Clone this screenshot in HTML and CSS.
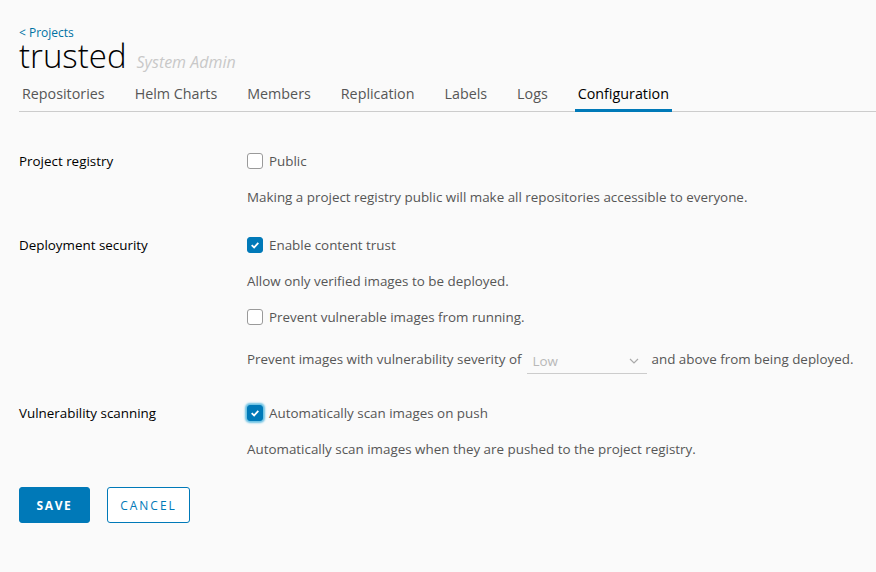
FILE: index.html
```html
<!DOCTYPE html>
<html>
<head>
<meta charset="utf-8">
<link rel="stylesheet" href="styles.css">
</head>
<body>
<div class="page">
  <a class="back" href="#">&lt; Projects</a>
  <div class="title-row">
    <h1 class="title">trusted</h1>
    <span class="role">System Admin</span>
  </div>
  <nav class="tabs">
    <span class="tab">Repositories</span>
    <span class="tab">Helm Charts</span>
    <span class="tab">Members</span>
    <span class="tab">Replication</span>
    <span class="tab">Labels</span>
    <span class="tab">Logs</span>
    <span class="tab active">Configuration</span>
  </nav>

  <div class="form">
    <div class="row">
      <div class="label">Project registry</div>
      <div class="controls">
        <label class="check"><span class="box"></span>Public</label>
        <p class="desc">Making a project registry public will make all repositories accessible to everyone.</p>
      </div>
    </div>
    <div class="row">
      <div class="label">Deployment security</div>
      <div class="controls">
        <label class="check"><span class="box on"><svg viewBox="0 0 16 16" width="16" height="16"><path d="M4.2 8.2 L7 10.8 L11.8 5.6" fill="none" stroke="#fff" stroke-width="2"/></svg></span>Enable content trust</label>
        <p class="desc">Allow only verified images to be deployed.</p>
        <label class="check"><span class="box"></span>Prevent vulnerable images from running.</label>
        <div class="severity">
          <span>Prevent images with vulnerability severity of</span>
          <span class="select">Low<svg class="chev" viewBox="0 0 10 6" width="10" height="6"><path d="M1 1 L5 5 L9 1" fill="none" stroke="#aaa" stroke-width="1.2"/></svg></span>
          <span>and above from being deployed.</span>
        </div>
      </div>
    </div>
    <div class="row">
      <div class="label">Vulnerability scanning</div>
      <div class="controls">
        <label class="check"><span class="box on focus"><svg viewBox="0 0 16 16" width="16" height="16"><path d="M4.2 8.2 L7 10.8 L11.8 5.6" fill="none" stroke="#fff" stroke-width="2"/></svg></span>Automatically scan images on push</label>
        <p class="desc">Automatically scan images when they are pushed to the project registry.</p>
      </div>
    </div>
  </div>

  <div class="actions">
    <button class="btn primary">SAVE</button>
    <button class="btn outline">CANCEL</button>
  </div>
</div>
</body>
</html>
```
FILE: styles.css
```css
html, body {
  margin: 0;
  padding: 0;
  background: #fafafa;
}
body {
  font-family: "Open Sans", "Lato", sans-serif;
  color: #565656;
  font-size: 13.4px;
}
.page {
  padding: 25px 0 0 19px;
}
.back {
  display: block;
  color: #0072a3;
  text-decoration: none;
  font-size: 12px;
  line-height: 16px;
}
.title-row {
  display: flex;
  align-items: baseline;
  gap: 10px;
  height: 30px;
}
.title {
  margin: 0;
  font-weight: 300;
  font-size: 33px;
  line-height: 30px;
  color: #000;
}
.role {
  font-style: italic;
  color: #c8c8c8;
  font-size: 16px;
  line-height: 20px;
}
.tabs {
  display: flex;
  gap: 24px;
  border-bottom: 1px solid #ccc;
  margin-top: 11px;
}
.tab {
  padding: 0 3px 3px;
  font-size: 14.3px;
  line-height: 24px;
  color: #565656;
  border-bottom: 3px solid transparent;
  margin-bottom: -1px;
}
.tab.active {
  color: #000;
  border-bottom-color: #0079b8;
}
.form {
  margin-top: 39px;
}
.row {
  display: flex;
  margin-bottom: 28px;
}
.label {
  width: 228px;
  flex: none;
  color: #000;
  line-height: 20px;
}
.controls {
  display: flex;
  flex-direction: column;
  gap: 16px;
}
.check {
  display: flex;
  align-items: center;
  gap: 6px;
  line-height: 20px;
  color: #565656;
}
.box {
  width: 14px;
  height: 14px;
  border: 1px solid #9a9a9a;
  border-radius: 3px;
  background: #fff;
  display: flex;
  align-items: center;
  justify-content: center;
}
.box.on {
  background: #0079b8;
  border-color: #0079b8;
}
.box.on svg {
  width: 14px;
  height: 14px;
}
.box.focus {
  box-shadow: 0 0 2px 2px #6bc1e3;
}
.desc {
  margin: 0;
  line-height: 20px;
}
.severity {
  display: flex;
  align-items: center;
  gap: 5px;
  height: 32px;
}
.select {
  width: 120px;
  border-bottom: 1px solid #ccc;
  display: flex;
  justify-content: space-between;
  align-items: center;
  color: #b8b8b8;
  padding: 2px 6px 2px 6px;
  box-sizing: border-box;
  line-height: 20px;
  margin-top: 4px;
}
.chev {
  margin-right: 2px;
}
.actions {
  display: flex;
  gap: 17px;
}
.btn {
  height: 36px;
  border-radius: 3px;
  font-family: inherit;
  font-size: 12px;
  letter-spacing: 1.6px;
  padding: 0;
  border: 1px solid #0079b8;
  text-align: center;
}
.btn.primary {
  background: #0079b8;
  color: #fff;
  font-weight: 700;
  width: 71px;
}
.btn.outline {
  background: #fff;
  color: #0079b8;
  width: 83px;
  letter-spacing: 2px;
}
```
